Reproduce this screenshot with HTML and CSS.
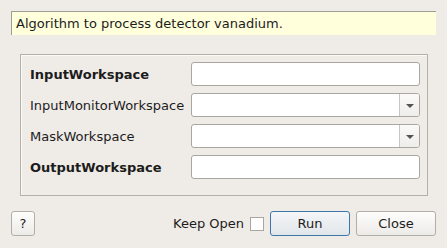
FILE: index.html
```html
<!DOCTYPE html>
<html lang="en">
<head>
    <meta charset="UTF-8">
    <title>DetectorVanadium</title>
    <link rel="stylesheet" href="styles.css">
</head>
<body>
    <div class="description">Algorithm to process detector vanadium.</div>

    <div class="property-group">
        <div class="property-row">
            <label class="property-label mandatory">InputWorkspace</label>
            <input type="text" class="property-input">
        </div>
        <div class="property-row">
            <label class="property-label">InputMonitorWorkspace</label>
            <div class="property-combo">
                <span class="combo-text"></span>
                <span class="combo-button"><span class="combo-arrow"></span></span>
            </div>
        </div>
        <div class="property-row">
            <label class="property-label">MaskWorkspace</label>
            <div class="property-combo">
                <span class="combo-text"></span>
                <span class="combo-button"><span class="combo-arrow"></span></span>
            </div>
        </div>
        <div class="property-row">
            <label class="property-label mandatory">OutputWorkspace</label>
            <input type="text" class="property-input">
        </div>
    </div>

    <div class="button-bar">
        <button type="button" class="btn btn-help">?</button>
        <div class="spacer"></div>
        <label class="keep-open">Keep Open <span class="checkbox"></span></label>
        <button type="button" class="btn btn-default">Run</button>
        <button type="button" class="btn">Close</button>
    </div>
</body>
</html>
```

FILE: styles.css
```css
body {
    margin: 0;
    padding: 0;
    width: 447px;
    height: 248px;
    background-color: #efebe7;
    font-family: "DejaVu Sans", sans-serif;
    font-size: 13px;
    color: #1c1c1c;
    overflow: hidden;
}

.description {
    margin: 11px 11px 0 11px;
    height: 23px;
    line-height: 23px;
    padding-left: 4px;
    background-color: #ffffdc;
    border-top: 1px solid #a09d98;
    border-left: 1px solid #a09d98;
}

.property-group {
    margin: 19px 0 0 20px;
    width: 391px;
    height: 124px;
    padding: 7px 6px 9px 9px;
    border: 1px solid #b3afa9;
    box-shadow: inset 1px 1px 0 #fbfaf9;
    display: flex;
    flex-direction: column;
    gap: 7px;
}

.property-row {
    display: flex;
    align-items: center;
    height: 24px;
}

.property-label {
    width: 161px;
    flex-shrink: 0;
}

.property-label.mandatory {
    font-weight: bold;
}

.property-input,
.property-combo {
    width: 229px;
    height: 24px;
    box-sizing: border-box;
    border: 1px solid #aaa6a1;
    border-radius: 3px;
    background-color: #ffffff;
    margin: 0;
    padding: 0;
}

.property-combo {
    display: flex;
}

.combo-text {
    flex: 1;
}

.combo-button {
    width: 19px;
    border-left: 1px solid #c9c6c1;
    background: linear-gradient(#fbfaf9, #efedea);
    border-radius: 0 2px 2px 0;
    display: flex;
    align-items: center;
    justify-content: center;
}

.combo-arrow {
    width: 0;
    height: 0;
    border-left: 4px solid transparent;
    border-right: 4px solid transparent;
    border-top: 4px solid #555350;
    margin-top: 1px;
}

.button-bar {
    display: flex;
    align-items: center;
    margin: 15px 11px 0 11px;
    height: 25px;
}

.spacer {
    flex: 1;
}

.btn {
    height: 25px;
    width: 80px;
    box-sizing: border-box;
    border: 1px solid #b1ada7;
    border-radius: 3px;
    background: linear-gradient(#fdfdfc, #edebe8);
    font-family: "DejaVu Sans", sans-serif;
    font-size: 13px;
    color: #1c1c1c;
    padding: 0;
    margin-left: 6px;
}

.btn-help {
    width: 24px;
    margin-left: 0;
}

.btn-default {
    border-color: #3d76a8;
    background: linear-gradient(#f4f6f8, #e1e6ea);
}

.keep-open {
    display: flex;
    align-items: center;
    gap: 6px;
}

.checkbox {
    width: 12px;
    height: 12px;
    border: 1px solid #a9a5a0;
    background-color: #ffffff;
}
```
